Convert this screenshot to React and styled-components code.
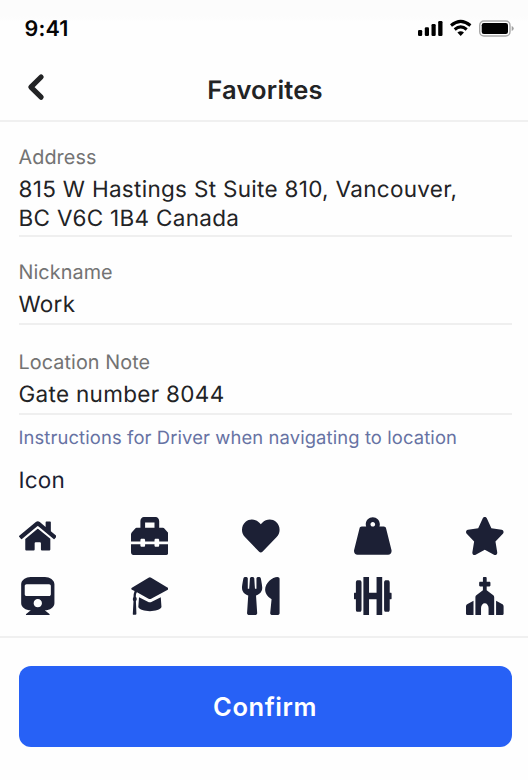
import React from "react";
import styled, { createGlobalStyle } from "styled-components";
import {
  FaHome,
  FaToolbox,
  FaHeart,
  FaWeightHanging,
  FaStar,
  FaTrain,
  FaUtensils,
  FaDumbbell,
  FaChurch,
} from "react-icons/fa";

const GlobalStyle = createGlobalStyle`
  * { box-sizing: border-box; }
  body { margin: 0; background: #fefefe; }
`;

const Screen = styled.div`
  display: flex;
  flex-direction: column;
  width: 528px;
  height: 780px;
  background: linear-gradient(#fcfcfc 0, #fcfcfc 16px, #fefefe 22px);
  font-family: "Inter", sans-serif;
  color: #222325;
  text-rendering: geometricPrecision;
`;

const StatusBar = styled.div`
  display: flex;
  justify-content: space-between;
  align-items: center;
  height: 56px;
  padding: 0 14px 0 24.5px;
`;

const Clock = styled.span`
  padding-top: 2px;
  font-size: 21.5px;
  font-weight: 600;
  letter-spacing: 0.2px;
  color: #050505;
`;

const StatusIcons = styled.svg`
  display: block;
  width: 96px;
  height: 18px;
`;

const NavBar = styled.header`
  display: grid;
  grid-template-columns: 60px 1fr 60px;
  align-items: center;
  height: 66px;
  border-bottom: 2px solid #f0f0f0;
`;

const BackButton = styled.button`
  display: flex;
  padding: 0 0 2px 26px;
  border: 0;
  background: none;

  svg {
    display: block;
    width: 20px;
    height: 28px;
  }
`;

const Title = styled.h1`
  margin: 0;
  padding: 5px 0 0 2px;
  text-align: center;
  font-size: 25.5px;
  line-height: 30px;
  font-weight: 600;
  letter-spacing: 0.2px;
`;

const Form = styled.main`
  display: flex;
  flex-direction: column;
  height: 516px;
  padding: 0 16.5px 0 18.5px;
  border-bottom: 2px solid #f0f0f0;
`;

const Field = styled.section`
  display: flex;
  flex-direction: column;
  gap: 5.5px;
  margin-top: ${(p) => p.$top}px;
  padding-bottom: ${(p) => p.$bottom}px;
  border-bottom: 2px solid #efefef;
`;

const Label = styled.span`
  font-size: 19.8px;
  line-height: 24px;
  letter-spacing: 0.08px;
  color: #737373;
`;

const Value = styled.span`
  font-size: 22.5px;
  line-height: 29px;
  letter-spacing: 0.3px;
  white-space: pre-line;
`;

const Hint = styled.p`
  margin: 12px 0 0;
  font-size: 18.4px;
  line-height: 22px;
  letter-spacing: 0.11px;
  color: #6672a3;
`;

const IconHeading = styled.h2`
  margin: 18.5px 0 0;
  font-size: 22.5px;
  line-height: 28px;
  font-weight: 400;
  letter-spacing: 0.2px;
  color: #1b1e33;
`;

const IconGrid = styled.div`
  display: grid;
  grid-template-columns: repeat(5, 38px);
  grid-auto-rows: 38px;
  justify-content: space-between;
  row-gap: 22px;
  margin: 21.5px 7.5px 0 0;
  color: #1c2035;
`;

const IconOption = styled.button`
  display: flex;
  align-items: center;
  justify-content: center;
  padding: 0;
  border: 0;
  background: none;
  color: inherit;

  svg {
    display: block;
    width: 37.6px;
    height: 38px;
  }
`;

const Footer = styled.footer`
  padding: 28.4px 16.5px 0 18.5px;
`;

const ConfirmButton = styled.button`
  display: block;
  width: 100%;
  height: 80.4px;
  padding: 0 0 1px;
  border: 0;
  border-radius: 12px;
  background: #2761f6;
  color: #fff;
  font-family: inherit;
  font-size: 25.5px;
  font-weight: 600;
  letter-spacing: 0.55px;
`;

function GraduationCap(props) {
  return (
    <svg viewBox="0 0 37.5 37.5" fill="currentColor" {...props}>
      <path d="M17.5.6Q18.8-.3 20.1.6L36.7 10.4Q38.1 11.4 36.7 12.4L20.1 21.4Q18.8 22.1 17.5 21.4L6 15Q4.9 15.5 4.8 19.5Q6 20.6 5.6 22.5L4.9 24L5.4 36.4Q5.4 37.5 4.4 37.5H2.5Q1.7 37.5 1.8 36.4L2.5 24Q1.2 22 2.5 19.8Q2.6 16 3.6 13.8L.9 12.4Q-.4 11.4.9 10.4Z" />
      <path d="M8 20.1L16.8 24.5Q18.8 25.5 20.8 24.5L29.7 20.1L30.4 29.8C28.5 35.2 9.2 35.2 7.3 29.8Z" />
    </svg>
  );
}

const stretch = { preserveAspectRatio: "none" };

const options = [
  { name: "Home", icon: <FaHome /> },
  { name: "Work", icon: <FaToolbox viewBox="0 32 512 448" {...stretch} /> },
  { name: "Favorite", icon: <FaHeart /> },
  { name: "Gym", icon: <FaWeightHanging /> },
  { name: "Star", icon: <FaStar viewBox="20 0 536 512" {...stretch} /> },
  { name: "Train", icon: <FaTrain /> },
  { name: "School", icon: <GraduationCap /> },
  { name: "Restaurant", icon: <FaUtensils viewBox="0 0 416 512" {...stretch} /> },
  { name: "Fitness", icon: <FaDumbbell viewBox="0 64 640 384" {...stretch} /> },
  { name: "Church", icon: <FaChurch viewBox="0 0 640 512" {...stretch} /> },
];

const fields = [
  { label: "Address", value: "815 W Hastings St Suite 810, Vancouver,\nBC V6C 1B4 Canada", top: 23, bottom: 2.5 },
  { label: "Nickname", value: "Work", top: 23, bottom: 4 },
  { label: "Location Note", value: "Gate number 8044", top: 25.5, bottom: 4 },
];

export default function App() {
  return (
    <Screen>
      <GlobalStyle />
      <StatusBar>
        <Clock>9:41</Clock>
        <StatusIcons viewBox="0 0 96 18">
          <rect x="0" y="11" width="4.2" height="6" rx="1.2" />
          <rect x="6.8" y="8.3" width="4.2" height="8.7" rx="1.2" />
          <rect x="13.5" y="5" width="4.2" height="12" rx="1.2" />
          <rect x="20.2" y="2" width="4.3" height="15" rx="1.2" />
          <g fill="none" stroke="#000" strokeWidth="3">
            <path d="M33 6.5Q42.7-1.8 52.4 6.5" />
            <path d="M36.7 10.5Q42.7 5.3 48.7 10.5" />
          </g>
          <path d="M39.4 13.5Q42.7 11 46 13.5L42.7 17Z" />
          <rect x="61.7" y="2" width="30.3" height="15" rx="4.2" fill="none" stroke="#a9a9a9" strokeWidth="1.4" />
          <rect x="63.7" y="4" width="26.3" height="11" rx="2.2" />
          <path d="M93.7 7Q95.7 7.7 95.7 9.5T93.7 12Z" fill="#a0a0a0" />
        </StatusIcons>
      </StatusBar>
      <NavBar>
        <BackButton aria-label="Back">
          <svg viewBox="0 0 20 28" fill="none" stroke="#222325" strokeWidth="5.2" strokeLinecap="round" strokeLinejoin="round">
            <path d="M15.1 4L4.9 14.2L15.1 24.2" />
          </svg>
        </BackButton>
        <Title>Favorites</Title>
      </NavBar>
      <Form>
        {fields.map((f) => (
          <Field key={f.label} $top={f.top} $bottom={f.bottom}>
            <Label>{f.label}</Label>
            <Value>{f.value}</Value>
          </Field>
        ))}
        <Hint>Instructions for Driver when navigating to location</Hint>
        <IconHeading>Icon</IconHeading>
        <IconGrid>
          {options.map((o) => (
            <IconOption key={o.name} aria-label={o.name}>
              {o.icon}
            </IconOption>
          ))}
        </IconGrid>
      </Form>
      <Footer>
        <ConfirmButton>Confirm</ConfirmButton>
      </Footer>
    </Screen>
  );
}
